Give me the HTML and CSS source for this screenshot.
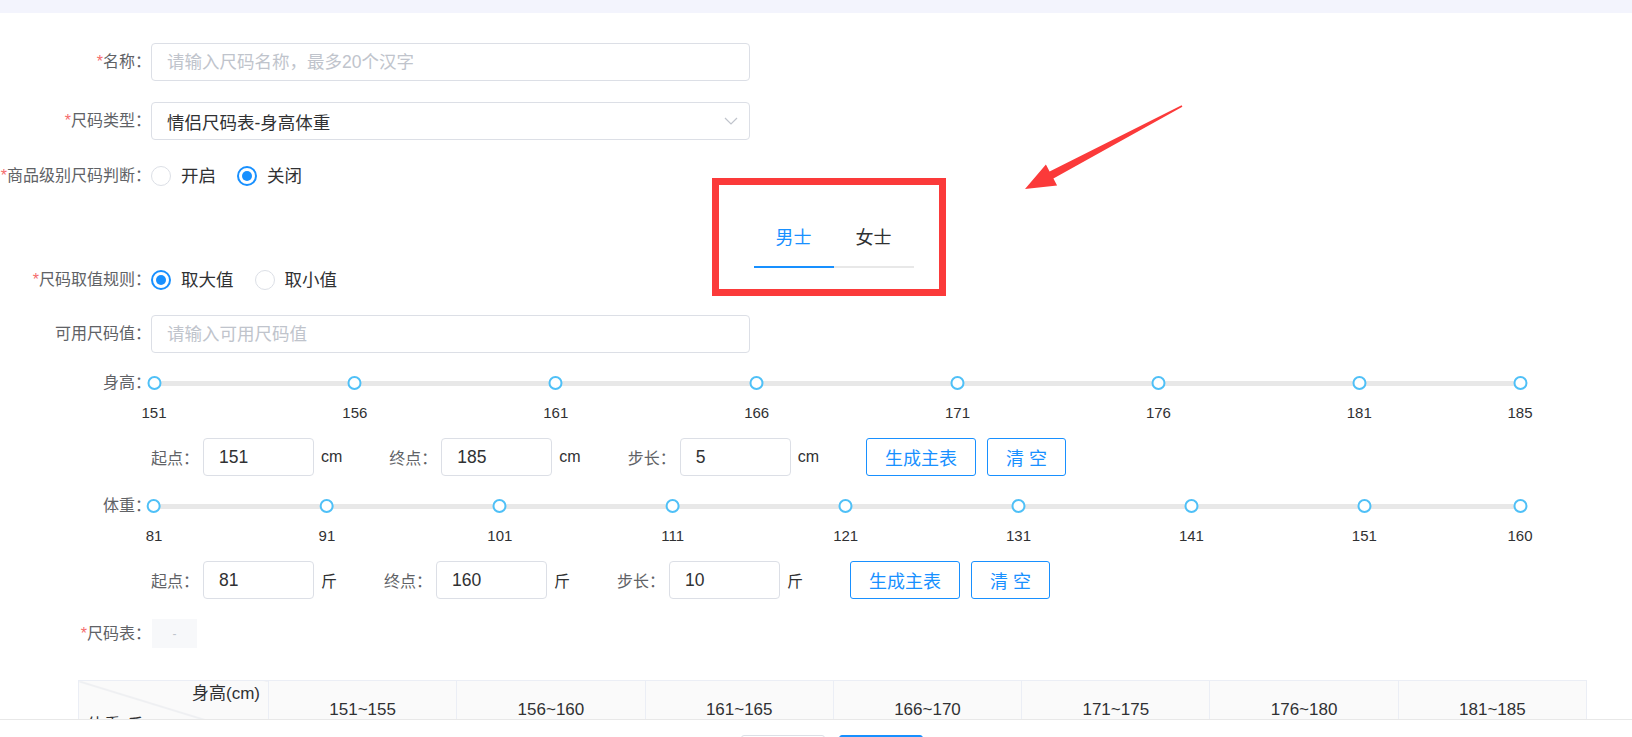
FILE: index.html
```html
<!DOCTYPE html>
<html>
<head>
    <meta charset="utf-8">
    <title>尺码表</title>
    <link rel="stylesheet" href="styles.css">
</head>
<body>
    <div class="top-bar"></div>

    <div class="page">
        <form class="size-form">
            <div class="form-item">
                <label class="item-label"><span class="req">*</span>名称：</label>
                <input class="text-input wide" type="text" placeholder="请输入尺码名称，最多20个汉字">
            </div>

            <div class="form-item">
                <label class="item-label"><span class="req">*</span>尺码类型：</label>
                <div class="select wide">
                    <span>情侣尺码表-身高体重</span>
                    <svg class="chevron" width="14" height="8" viewBox="0 0 14 8"><polyline points="1,1 7,7 13,1" fill="none" stroke="#c0c4cc" stroke-width="1.2"/></svg>
                </div>
            </div>

            <div class="form-item radio-row">
                <label class="item-label"><span class="req">*</span>商品级别尺码判断：</label>
                <span class="radio"><i class="radio-dot"></i>开启</span>
                <span class="radio checked"><i class="radio-dot"></i>关闭</span>
            </div>

            <div class="tabs-wrap">
                <div class="tabs">
                    <div class="tab active">男士</div>
                    <div class="tab">女士</div>
                </div>
            </div>

            <div class="form-item rule-row">
                <label class="item-label"><span class="req">*</span>尺码取值规则：</label>
                <span class="radio checked"><i class="radio-dot"></i>取大值</span>
                <span class="radio"><i class="radio-dot"></i>取小值</span>
            </div>

            <div class="form-item usable-row">
                <label class="item-label">可用尺码值：</label>
                <input class="text-input wide" type="text" placeholder="请输入可用尺码值">
            </div>

            <!-- 身高 -->
            <div class="form-item slider-row">
                <label class="item-label">身高：</label>
                <div class="slider">
                    <div class="rail"></div>
                    <div class="stops">
                        <span class="stop" style="left:0%"><i class="dot"></i><em class="num">151</em></span>
                        <span class="stop" style="left:14.706%"><i class="dot"></i><em class="num">156</em></span>
                        <span class="stop" style="left:29.412%"><i class="dot"></i><em class="num">161</em></span>
                        <span class="stop" style="left:44.118%"><i class="dot"></i><em class="num">166</em></span>
                        <span class="stop" style="left:58.824%"><i class="dot"></i><em class="num">171</em></span>
                        <span class="stop" style="left:73.529%"><i class="dot"></i><em class="num">176</em></span>
                        <span class="stop" style="left:88.235%"><i class="dot"></i><em class="num">181</em></span>
                        <span class="stop" style="left:100%"><i class="dot"></i><em class="num">185</em></span>
                    </div>
                </div>
            </div>

            <div class="range-row">
                <div class="range-group">
                    <span class="range-label">起点：</span>
                    <input class="text-input small" type="text" value="151">
                    <span class="unit">cm</span>
                </div>
                <div class="range-group">
                    <span class="range-label">终点：</span>
                    <input class="text-input small" type="text" value="185">
                    <span class="unit">cm</span>
                </div>
                <div class="range-group">
                    <span class="range-label">步长：</span>
                    <input class="text-input small" type="text" value="5">
                    <span class="unit">cm</span>
                </div>
                <button class="btn-outline" type="button">生成主表</button>
                <button class="btn-outline" type="button">清 空</button>
            </div>

            <!-- 体重 -->
            <div class="form-item slider-row">
                <label class="item-label">体重：</label>
                <div class="slider">
                    <div class="rail"></div>
                    <div class="stops">
                        <span class="stop" style="left:0%"><i class="dot"></i><em class="num">81</em></span>
                        <span class="stop" style="left:12.658%"><i class="dot"></i><em class="num">91</em></span>
                        <span class="stop" style="left:25.316%"><i class="dot"></i><em class="num">101</em></span>
                        <span class="stop" style="left:37.975%"><i class="dot"></i><em class="num">111</em></span>
                        <span class="stop" style="left:50.633%"><i class="dot"></i><em class="num">121</em></span>
                        <span class="stop" style="left:63.291%"><i class="dot"></i><em class="num">131</em></span>
                        <span class="stop" style="left:75.949%"><i class="dot"></i><em class="num">141</em></span>
                        <span class="stop" style="left:88.608%"><i class="dot"></i><em class="num">151</em></span>
                        <span class="stop" style="left:100%"><i class="dot"></i><em class="num">160</em></span>
                    </div>
                </div>
            </div>

            <div class="range-row">
                <div class="range-group">
                    <span class="range-label">起点：</span>
                    <input class="text-input small" type="text" value="81">
                    <span class="unit">斤</span>
                </div>
                <div class="range-group">
                    <span class="range-label">终点：</span>
                    <input class="text-input small" type="text" value="160">
                    <span class="unit">斤</span>
                </div>
                <div class="range-group">
                    <span class="range-label">步长：</span>
                    <input class="text-input small" type="text" value="10">
                    <span class="unit">斤</span>
                </div>
                <button class="btn-outline" type="button">生成主表</button>
                <button class="btn-outline" type="button">清 空</button>
            </div>

            <div class="form-item chip-row">
                <label class="item-label"><span class="req">*</span>尺码表：</label>
                <span class="table-chip">-</span>
            </div>

            <table class="size-table">
                <tr>
                    <th class="corner">
                        <div class="corner-top">身高(cm)</div>
                        <div class="corner-bottom">体重(斤)</div>
                    </th>
                    <th>151~155</th>
                    <th>156~160</th>
                    <th>161~165</th>
                    <th>166~170</th>
                    <th>171~175</th>
                    <th>176~180</th>
                    <th>181~185</th>
                </tr>
                <tr>
                    <td>81~90</td>
                    <td></td><td></td><td></td><td></td><td></td><td></td><td></td>
                </tr>
            </table>
        </form>

        <!-- 标注 -->
        <div class="mark-box"></div>
        <svg class="mark-arrow" width="180" height="105" viewBox="0 0 180 105">
            <polygon points="10,94 42.1,90.6 38.4,83.5 167.4,11.7 166.6,10.3 34.6,76.5 30.9,69.4" fill="#fb3a3a"/>
        </svg>
    </div>

    <div class="footer">
        <button class="btn-default" type="button">取消</button>
        <button class="btn-primary" type="button">保存</button>
    </div>
</body>
</html>
```

FILE: styles.css
```css
html, body{
    margin:0;
    padding:0;
    overflow:hidden;
    background:#fff;
    font-family:"Liberation Sans", "Noto Sans CJK SC", sans-serif;
    color:#303133;
}

.top-bar{
    height:13px;
    background-color:#f3f4fd;
}

.page{
    position:relative;
}

.size-form{
    padding-top:30px;
}

.form-item{
    display:flex;
    align-items:center;
    margin-bottom:21px;
}

.item-label{
    width:151px;
    flex-shrink:0;
    text-align:right;
    font-size:16px;
    line-height:24px;
    color:#606266;
    white-space:nowrap;
}

.req{
    color:#f56c6c;
}

.text-input{
    box-sizing:border-box;
    height:38px;
    border:1px solid #dcdfe6;
    border-radius:4px;
    padding:0 15px;
    font-family:inherit;
    font-size:17.5px;
    color:#303133;
    outline:none;
    background:#fff;
}

.text-input::placeholder{
    color:#c0c4cc;
}

.wide{
    width:599px;
}

.small{
    width:111px;
}

.select{
    box-sizing:border-box;
    height:38px;
    border:1px solid #dcdfe6;
    border-radius:4px;
    padding:0 15px;
    display:flex;
    align-items:center;
    justify-content:space-between;
    font-size:17.5px;
    color:#303133;
}

.chevron{
    margin-right:-4px;
}

.radio-row{
    min-height:30px;
    margin-bottom:0;
}

.radio{
    display:inline-flex;
    align-items:center;
    font-size:17.5px;
    line-height:24px;
    color:#303133;
    margin-right:21px;
}

.radio-dot{
    box-sizing:border-box;
    width:20px;
    height:20px;
    border:1px solid #dcdfe6;
    border-radius:50%;
    margin-right:10px;
    display:flex;
    align-items:center;
    justify-content:center;
}

.radio.checked .radio-dot{
    border:2px solid #1890ff;
}

.radio.checked .radio-dot::after{
    content:"";
    width:10px;
    height:10px;
    border-radius:50%;
    background:#1890ff;
}

/* tabs */
.tabs-wrap{
    margin-left:151px;
    width:1365px;
    display:flex;
    justify-content:center;
    padding-top:19px;
}

.tabs{
    display:flex;
    border-bottom:2px solid #e8e8e8;
}

.tab{
    padding:0 22px;
    height:56px;
    line-height:56px;
    font-size:18px;
    color:#303133;
}

.tab.active{
    color:#1890ff;
    border-bottom:2px solid #1890ff;
    margin-bottom:-2px;
}

.rule-row{
    min-height:24px;
    margin-bottom:23px;
}

.usable-row{
    margin-bottom:18px;
}

/* slider */
.slider-row{
    align-items:flex-start;
    margin-bottom:13px;
}

.slider{
    position:relative;
    width:1376px;
    height:54px;
}

.rail{
    position:absolute;
    left:3px;
    width:1366px;
    top:10px;
    height:5px;
    border-radius:3px;
    background:#e8e8e8;
}

.stops{
    position:absolute;
    left:3px;
    width:1366px;
    top:0;
    height:100%;
}

.stop{
    position:absolute;
    top:0;
    transform:translateX(-50%);
    display:flex;
    flex-direction:column;
    align-items:center;
}

.dot{
    box-sizing:border-box;
    width:14px;
    height:14px;
    margin-top:5px;
    border:2px solid #4fc0f7;
    border-radius:50%;
    background:#fff;
}

.num{
    margin-top:13px;
    font-style:normal;
    font-size:15px;
    line-height:20px;
    color:#303133;
}

/* range inputs */
.range-row{
    display:flex;
    align-items:center;
    margin-left:151px;
    margin-bottom:18px;
}

.range-group{
    display:flex;
    align-items:center;
    margin-right:47px;
}

.range-label{
    font-size:16px;
    color:#606266;
    margin-right:4px;
}

.unit{
    font-size:16px;
    color:#303133;
    margin-left:7px;
}

.btn-outline{
    height:38px;
    padding:0 18px;
    margin-right:11px;
    border:1px solid #1890ff;
    border-radius:3px;
    background:#fff;
    color:#1890ff;
    font-family:inherit;
    font-size:18px;
}

.chip-row{
    margin-top:20px;
    margin-bottom:32px;
}

.table-chip{
    width:45px;
    height:29px;
    margin-left:1px;
    background:#f7f8fa;
    color:#c0c4cc;
    font-size:12px;
    display:flex;
    align-items:center;
    justify-content:center;
}

/* table */
.size-table{
    margin-left:78px;
    width:1509px;
    border-collapse:collapse;
    table-layout:fixed;
}

.size-table th,
.size-table td{
    border:1px solid #ebeef5;
    font-size:17px;
    font-weight:normal;
    color:#303133;
    text-align:center;
    height:58px;
    padding:0;
}

.size-table th{
    background:#fafafa;
}

.size-table .corner{
    width:189px;
    background:#fafafa linear-gradient(to top right, transparent calc(50% - 1px), #e4e6eb 50%, transparent calc(50% + 1px));
    vertical-align:top;
}

.corner-top{
    text-align:right;
    padding:2px 8px 0 0;
    line-height:22px;
}

.corner-bottom{
    text-align:left;
    padding:10px 0 0 8px;
    line-height:22px;
}

/* annotation */
.mark-box{
    position:absolute;
    left:712px;
    top:165px;
    width:220px;
    height:104px;
    border:7px solid #fb3a3a;
}

.mark-arrow{
    position:absolute;
    left:1015px;
    top:82px;
}

/* footer */
.footer{
    position:fixed;
    left:0;
    right:0;
    top:719px;
    height:60px;
    background:#fff;
    border-top:1px solid #e8e8e8;
    display:flex;
    justify-content:center;
    padding-left:32px;
    padding-top:15px;
    box-sizing:border-box;
}

.btn-default,
.btn-primary{
    width:84px;
    height:38px;
    border-radius:3px;
    font-family:inherit;
    font-size:16px;
    margin:0 7px;
}

.btn-default{
    border:1px solid #dcdfe6;
    background:#fff;
    color:#606266;
}

.btn-primary{
    border:1px solid #1890ff;
    background:#1890ff;
    color:#fff;
}
```
